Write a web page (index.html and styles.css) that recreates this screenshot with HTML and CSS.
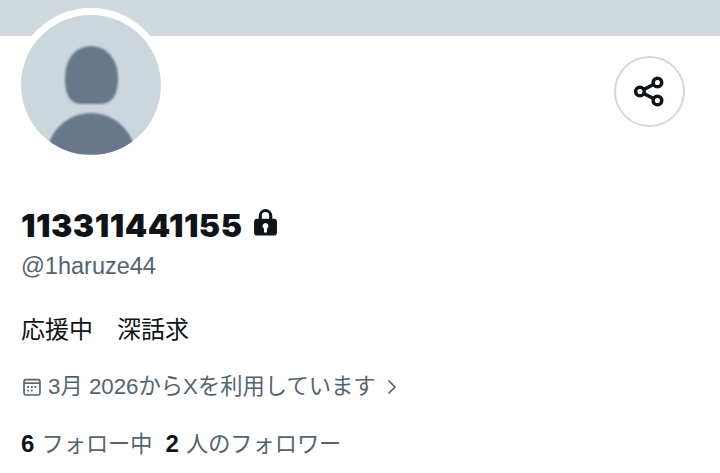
FILE: index.html
```html
<!DOCTYPE html>
<html lang="ja">
<head>
    <meta charset="utf-8">
    <meta name="viewport" content="width=device-width, initial-scale=1.0">
    <title>@1haruze44</title>
    <link rel="stylesheet" href="styles.css">
</head>

<body>
    <div class="banner"></div>

    <div class="profile">
        <div class="top-row">
            <div class="avatar">
                <svg viewBox="0 0 140 140" width="140" height="140">
                    <path fill="#66788a" d="M70 31c16 0 27 14 27 32 0 17-6 26-18 26H61c-12 0-17-9-17-26 0-18 10-32 26-32z"/>
                    <ellipse cx="70" cy="144" rx="45" ry="46" fill="#66788a"/>
                </svg>
            </div>
            <button class="share" type="button">
                <svg viewBox="0 0 30 30" width="35" height="35" fill="none" stroke="#0f1419" stroke-width="3">
                    <circle cx="6.800" cy="15" r="3.700"/>
                    <circle cx="21.800" cy="7.300" r="3.700"/>
                    <circle cx="21.800" cy="22.700" r="3.700"/>
                    <path d="M10.200 13.200 18.400 9M10.200 16.800l8.200 4.200"/>
                </svg>
            </button>
        </div>

        <h1 class="name">113311441155
            <svg class="lock" viewBox="0 0 24 28" width="25" height="30">
                <path fill="none" stroke="#0f1419" stroke-width="3" d="M7 12V7a5 5 0 0 1 10 0v5"/>
                <path fill="#0f1419" fill-rule="evenodd" d="M4 10h16a3 3 0 0 1 3 3v10a3 3 0 0 1-3 3H4a3 3 0 0 1-3-3V13a3 3 0 0 1 3-3zm8 4a3 3 0 0 0-1.400 5.600V23h2.800v-3.400A3 3 0 0 0 12 14z"/>
            </svg>
        </h1>
        <div class="handle">@1haruze44</div>

        <p class="bio">応援中　深話求</p>

        <div class="joined">
            <svg class="calendar" viewBox="0 0 20 20" width="22" height="22" fill="none" stroke="#536471" stroke-width="1.500">
                <rect x="2.750" y="3.250" width="14.500" height="14" rx="2"/>
                <path d="M3 6.500h14"/>
                <path stroke-width="1.600" stroke-dasharray="1.600 1.700" d="M5.700 10h9M5.700 13.400h6"/>
            </svg>
            <span>3月 2026からXを利用しています</span>
            <svg class="chevron" viewBox="0 0 12 16" width="12" height="16" fill="none" stroke="#536471" stroke-width="1.700">
                <path d="M2.500 1.500 9 8l-6.500 6.500"/>
            </svg>
        </div>

        <div class="stats">
            <span><b>6</b> フォロー中</span>
            <span><b>2</b> 人のフォロワー</span>
        </div>
    </div>
</body>
</html>
```

FILE: styles.css
```css
body {
    margin: 0;
    background-color: #ffffff;
    font-family: "Liberation Sans", "Noto Sans CJK JP", sans-serif;
    color: #0f1419;
    overflow: hidden;
}

.banner {
    height: 36px;
    background-color: #cfd9de;
}

.profile {
    padding: 0 35px 0 21px;
}

.top-row {
    display: flex;
    justify-content: space-between;
    align-items: flex-start;
}

.avatar {
    width: 140px;
    height: 140px;
    margin-top: -21px;
    border-radius: 50%;
    background-color: #ccd6dd;
    box-shadow: 0 0 0 7px #ffffff;
    overflow: hidden;
}

.avatar svg {
    display: block;
    filter: blur(1px);
}

.share {
    display: flex;
    align-items: center;
    justify-content: center;
    width: 71px;
    height: 71px;
    margin-top: 20px;
    padding: 0;
    background: #ffffff;
    border: 2px solid #cfd9de;
    border-radius: 50%;
}

.name {
    display: flex;
    align-items: center;
    gap: 11px;
    margin: 50px 0 0 0;
    height: 40px;
    font-family: Inter, "Liberation Sans", sans-serif;
    font-size: 32px;
    font-weight: 900;
    letter-spacing: 0.5px;
}

.lock {
    margin-top: -4px;
}

.handle {
    margin-top: 6px;
    font-size: 23.5px;
    line-height: 30px;
    color: #536471;
}

.bio {
    margin: 33px 0 0 0;
    font-size: 24px;
    line-height: 32px;
}

.joined {
    display: flex;
    align-items: center;
    gap: 5px;
    margin-top: 25px;
    font-size: 22.3px;
    line-height: 32px;
    color: #536471;
}

.chevron {
    margin-left: 5px;
}

.stats {
    display: flex;
    gap: 13px;
    margin-top: 25px;
    font-size: 22.2px;
    line-height: 32px;
    color: #536471;
}

.stats b {
    margin-right: 1px;
    font-size: 24px;
    color: #0f1419;
}
```
